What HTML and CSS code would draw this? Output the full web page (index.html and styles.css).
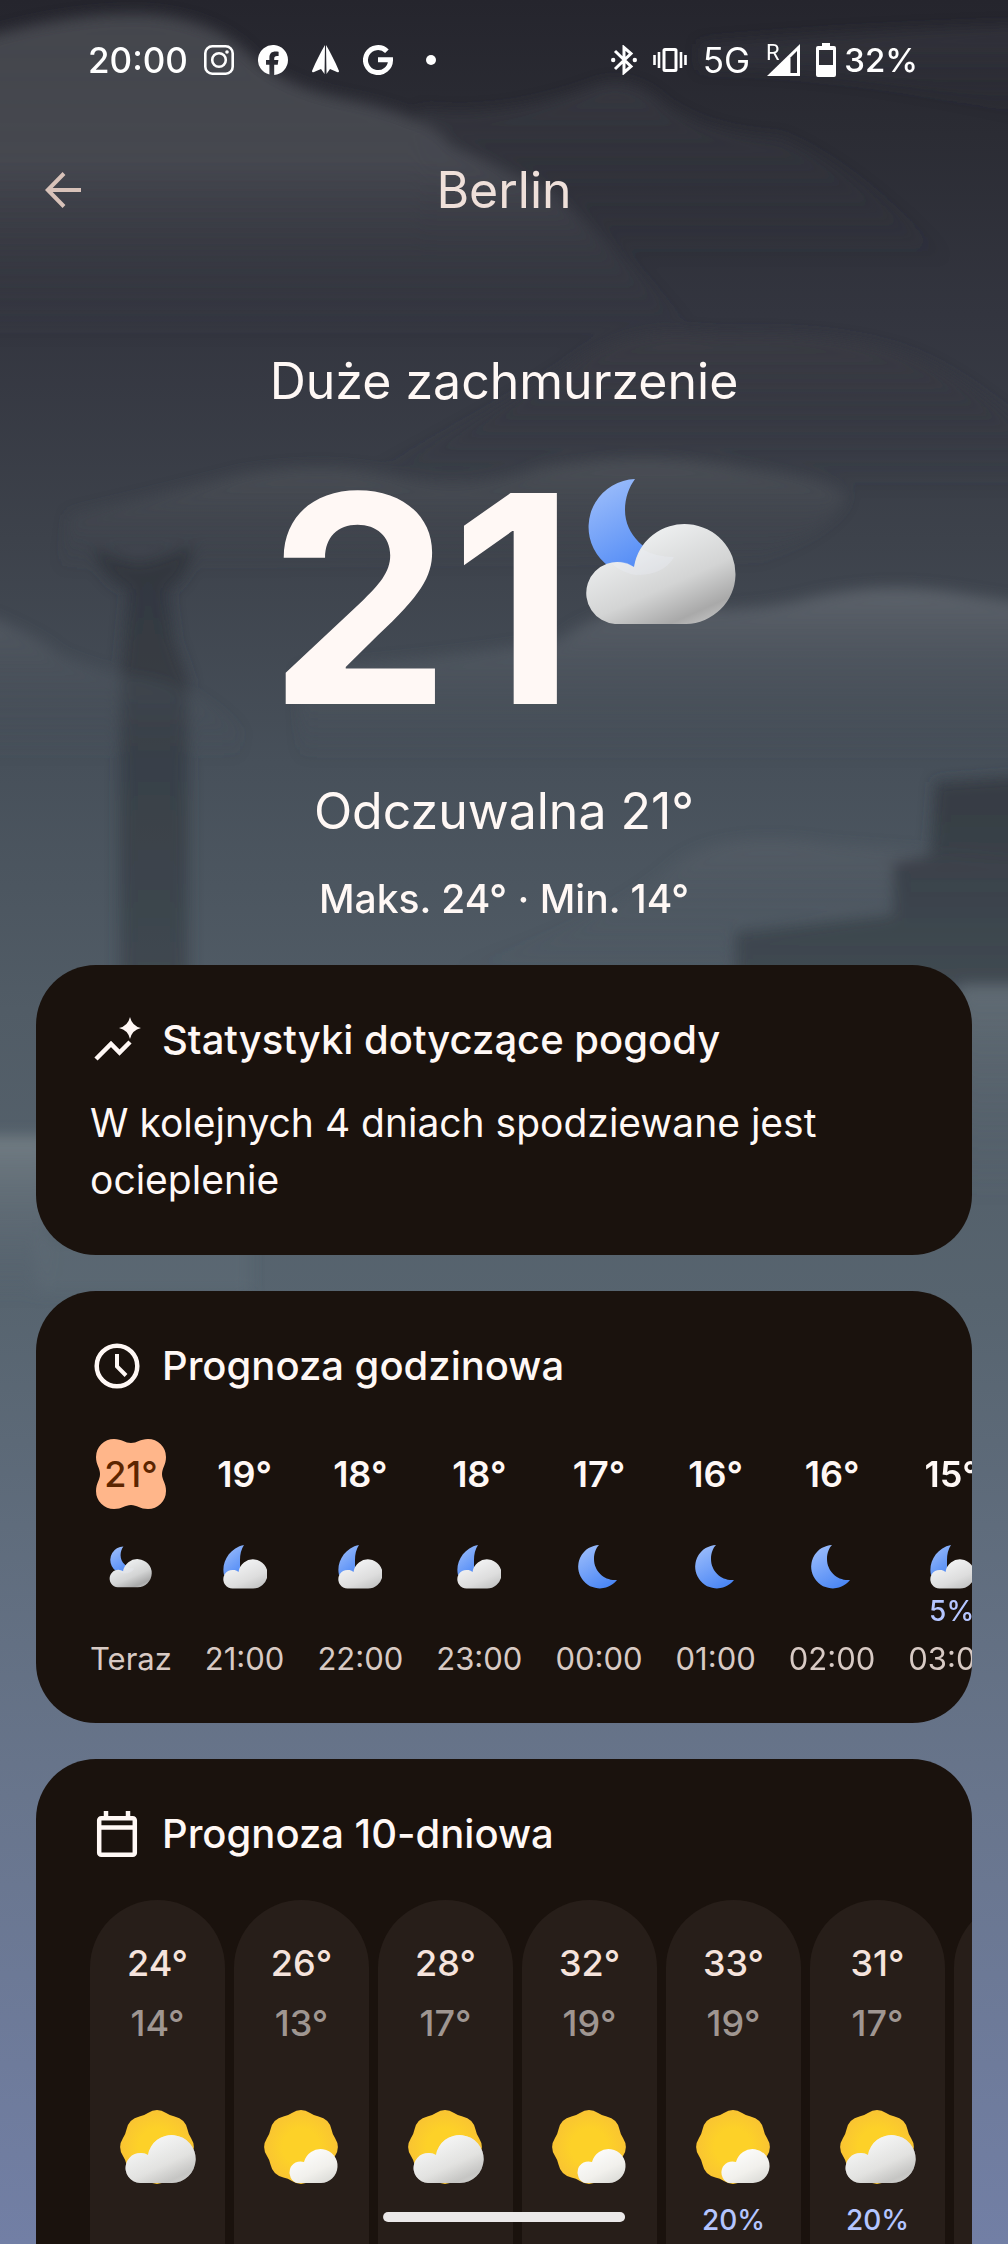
FILE: index.html
```html
<!DOCTYPE html>
<html lang="pl">
<head>
    <meta charset="UTF-8">
    <meta name="viewport" content="width=device-width, initial-scale=1.0">
    <title>Pogoda - Berlin</title>

    <link rel="stylesheet" href="styles.css">
</head>
<body>
    <!-- Shared icons -->
    <svg class="sprite" width="0" height="0" aria-hidden="true">
        <defs>
            <linearGradient id="moonFill" x1="0.2" y1="0" x2="0.7" y2="1">
                <stop offset="0" stop-color="#9cbdfb"/>
                <stop offset="1" stop-color="#4a86f5"/>
            </linearGradient>
            <linearGradient id="cloudFill" x1="0.25" y1="0.1" x2="0.85" y2="1">
                <stop offset="0" stop-color="#f1f3f4"/>
                <stop offset="0.55" stop-color="#d3d4d4"/>
                <stop offset="0.85" stop-color="#a9a9a9"/>
                <stop offset="1" stop-color="#c4c4c4"/>
            </linearGradient>
            <linearGradient id="softCloudFill" x1="0.3" y1="0.1" x2="0.9" y2="1">
                <stop offset="0" stop-color="#f3f4f5"/>
                <stop offset="0.6" stop-color="#dddddd"/>
                <stop offset="1" stop-color="#bdbebe"/>
            </linearGradient>
            <linearGradient id="whiteCloudFill" x1="0.2" y1="0" x2="0.9" y2="1">
                <stop offset="0" stop-color="#ffffff"/>
                <stop offset="0.6" stop-color="#f1f0ec"/>
                <stop offset="1" stop-color="#d8d8d4"/>
            </linearGradient>
            <radialGradient id="sunFill">
                <stop offset="0.5" stop-color="#fdd128"/>
                <stop offset="1" stop-color="#f9c432"/>
            </radialGradient>
        </defs>

        <symbol id="cloudy-night" viewBox="0 0 156 146">
            <path fill="url(#moonFill)" d="M51 0A48 48 0 1 0 90 78C62 76 41 56 41 31 41 19 45 8 51 0z"/>
            <path fill="url(#cloudFill)" d="M31 145A31 31 0 1 1 50 88 51 50 0 1 1 102 145z"/>
            <path fill="#eef4ff" opacity="0.25" d="M50 88Q52 78 58 70 72 78 90 78 80 96 52 96 38 94 27 84 40 80 50 88z"/>
        </symbol>

        <symbol id="mostly-cloudy-night" viewBox="0 0 44 44">
            <path fill="url(#moonFill)" d="M21 0C6 3-2 18 1 30L17 34V15Q17 6 21 0z"/>
            <path fill="url(#softCloudFill)" d="M9.500 43.500A9.300 9.300 0 1 1 15.500 27A14.600 14.600 0 1 1 29 43.500z"/>
        </symbol>

        <symbol id="clear-night" viewBox="0 0 44 44">
            <path fill="url(#moonFill)" d="M22 0A21.700 21.700 0 1 0 40 35C27 36 17 26 17 14 17 8 19 3 22 0z"/>
        </symbol>

        <symbol id="sun" viewBox="0 0 76 76">
            <path fill="url(#sunFill)" d="M27.900 3A17 17 0 0 1 46.100 3Q50 5.600 54.600 6.500A17 17 0 0 1 67.500 19.400Q68.400 24 71 27.900A17 17 0 0 1 71 46.100Q68.400 50 67.500 54.600A17 17 0 0 1 54.600 67.500Q50 68.400 46.100 71A17 17 0 0 1 27.900 71Q24 68.400 19.400 67.500A17 17 0 0 1 6.500 54.600Q5.600 50 3 46.100A17 17 0 0 1 3 27.900Q5.600 24 6.500 19.400A17 17 0 0 1 19.400 6.500Q24 5.600 27.900 3z"/>
        </symbol>

        <symbol id="cloudy-day" viewBox="0 0 76 76">
            <use href="#sun" width="76" height="76"/>
            <path fill="url(#cloudFill)" d="M20 73A15 15 0 1 1 28 45 24 24 0 1 1 52 73z"/>
            <path fill="url(#whiteCloudFill)" opacity="0.5" d="M20 73A15 15 0 1 1 28 45 24 24 0 1 1 52 73z"/>
        </symbol>

        <symbol id="sunny-day" viewBox="0 0 76 76">
            <use href="#sun" width="76" height="76"/>
            <path fill="url(#whiteCloudFill)" d="M33 73A11 11 0 1 1 40 52 17 17 0 1 1 57 73z"/>
        </symbol>
    </svg>

    <div class="screen">
        <!-- Night sky over the city -->
        <svg class="scenery" viewBox="0 0 1008 2244" preserveAspectRatio="none" aria-hidden="true">
            <defs>
                <linearGradient id="mist1" x1="0" y1="0" x2="0" y2="1">
                    <stop offset="0" stop-color="#45464d"/>
                    <stop offset="0.45" stop-color="#4a4c54" stop-opacity="0.85"/>
                    <stop offset="1" stop-color="#3a3d46" stop-opacity="0"/>
                </linearGradient>
                <linearGradient id="mist2" x1="0" y1="0" x2="0" y2="1">
                    <stop offset="0" stop-color="#3a3b43"/>
                    <stop offset="1" stop-color="#33353f" stop-opacity="0"/>
                </linearGradient>
                <linearGradient id="mist3" x1="0" y1="0" x2="0" y2="1">
                    <stop offset="0" stop-color="#50545a"/>
                    <stop offset="1" stop-color="#444851" stop-opacity="0"/>
                </linearGradient>
                <linearGradient id="mist4" x1="0" y1="0" x2="0" y2="1">
                    <stop offset="0" stop-color="#60666e"/>
                    <stop offset="1" stop-color="#4c555f" stop-opacity="0"/>
                </linearGradient>
                <linearGradient id="mist5" x1="0" y1="0" x2="0" y2="1">
                    <stop offset="0" stop-color="#717c83"/>
                    <stop offset="1" stop-color="#5a6672" stop-opacity="0"/>
                </linearGradient>
                <linearGradient id="stone" x1="0" y1="0" x2="0" y2="1">
                    <stop offset="0" stop-color="#2f343b"/>
                    <stop offset="1" stop-color="#3c444c"/>
                </linearGradient>
                <filter id="soft" x="-10%" y="-10%" width="120%" height="120%">
                    <feGaussianBlur stdDeviation="7"/>
                </filter>
            </defs>
            <g filter="url(#soft)">
                <path fill="url(#mist2)" opacity="0.8" d="M420 110Q500 120 590 88 630 72 665 105 710 135 780 138 850 165 950 260H420z"/>
                <path fill="url(#mist2)" opacity="0.6" d="M700 44Q860 30 1040 26V120Q860 70 700 70z"/>
                <path fill="url(#mist1)" d="M-40 45Q60 12 140 14 210 16 250 55 280 85 340 98 430 115 450 145 500 168 545 188 590 220 700 340H-40z"/>
                <path fill="url(#mist2)" d="M340 490Q520 400 570 365 620 325 720 335 860 330 930 365 980 390 1040 440V490z"/>
                <path fill="url(#mist3)" opacity="0.8" d="M70 515Q180 490 240 475 330 460 400 478 470 492 540 468 650 450 740 468 850 480 845 500 830 530 760 560L60 570z"/>
                <path fill="url(#stone)" opacity="0.8" d="M92 546Q120 562 142 562 165 558 194 544 188 580 168 590L174 640 188 680V1000H120V680L128 590Q102 580 92 546z"/>
                <path fill="url(#mist4)" opacity="0.9" d="M300 670Q480 655 560 640 600 605 680 610 760 612 810 598 880 582 950 592L1040 606V760H300z"/>
                <path fill="url(#mist4)" opacity="0.6" d="M-40 605Q40 635 60 655 110 675 150 680 200 690 240 730V760H-40z"/>
                <path fill="url(#mist4)" opacity="0.4" d="M440 970Q600 930 680 860 730 830 830 845L1040 860V970z"/>
                <path fill="url(#stone)" opacity="0.75" d="M935 782L1040 775V988H735V932L893 915V862L930 855z"/>
                <path fill="url(#mist5)" opacity="0.5" d="M960 985H1040V1200H960z"/>
                <path fill="url(#mist5)" d="M-40 1136H50V1300H-40z"/>
                <path fill="#616e79" opacity="0.4" d="M36 1240H250V1292H36z"/>
            </g>
        </svg>

        <header class="status-bar">
            <div class="status-group">
                <span class="status-text">20:00</span>
                <div class="status-apps">
                    <svg width="30" height="30" viewBox="0 0 30 30" fill="none" stroke="#fff" aria-label="Instagram">
                        <rect x="1.300" y="1.300" width="27.400" height="27.400" rx="7" stroke-width="2.600"/>
                        <circle cx="15" cy="15" r="6.800" stroke-width="2.600"/>
                        <circle cx="23" cy="7" r="1.800" fill="#fff" stroke="none"/>
                    </svg>
                    <svg width="30" height="30" viewBox="0 0 30 30" aria-label="Facebook">
                        <path fill="#fff" d="M30 15A15 15 0 1 0 11.400 29.600V19.700H8V15h3.400v-2.200C11.400 8.500 13.500 6.500 17.800 6.500c.8 0 2.200.2 2.800.3v4.300c-.3 0-.8-.1-1.500-.1-2.100 0-2.900.8-2.900 2.900V15h4.200l-.7 4.700h-3.500v10.200A15 15 0 0 0 30 15z"/>
                    </svg>
                    <svg width="27" height="30" viewBox="0 0 27 30" aria-label="Nawigacja">
                        <path fill="#fff" d="M13 0C9 7 4 16 0 26q0 2 2 1l7-3 3.500 5zM14 0c4 7 9 16 13 26q0 2-2 1l-7-3-3.500 5z"/>
                    </svg>
                    <svg width="30" height="30" viewBox="0 0 30 30" fill="none" stroke="#fff" stroke-width="5" aria-label="Google">
                        <path d="M23.900 6.300A12.500 12.500 0 1 0 27.500 14.800H15"/>
                    </svg>
                    <svg width="28" height="30" viewBox="0 0 28 30" aria-label="Więcej">
                        <circle cx="14" cy="15" r="5" fill="#fff"/>
                    </svg>
                </div>
            </div>

            <div class="status-group">
                <svg width="26" height="30" viewBox="0 0 26 30" fill="none" stroke="#fff" stroke-width="3" aria-label="Bluetooth">
                    <path d="M4 6l16 15.500-7 6V2.500l7 6L4 24"/>
                    <circle cx="2.200" cy="15" r="2.200" fill="#fff" stroke="none"/>
                    <circle cx="23.800" cy="15" r="2.200" fill="#fff" stroke="none"/>
                </svg>
                <svg width="34" height="26" viewBox="0 0 34 26" fill="none" stroke="#fff" stroke-width="3" aria-label="Wibracje">
                    <rect x="11" y="2.500" width="12" height="21" rx="1"/>
                    <path d="M1.500 8v10M6 5v16M28 5v16M32.500 8v10" stroke-width="2.600"/>
                </svg>
                <span class="status-text status-network">5G</span>
                <svg class="signal" width="34" height="34" viewBox="0 0 34 34" aria-label="Zasięg">
                    <path fill="#fff" d="M1 33L34 1v32z"/>
                    <path fill="#2b2b33" d="M24.500 14.500L31 8v22h-6.500z"/>
                    <text class="signal-roaming" x="0" y="17">R</text>
                </svg>
                <div class="battery">
                    <svg width="20" height="34" viewBox="0 0 20 34" aria-label="Bateria">
                        <path fill="#fff" fill-rule="evenodd" d="M6 0h8v3h4a2 2 0 0 1 2 2v27a2 2 0 0 1-2 2H2a2 2 0 0 1-2-2V5a2 2 0 0 1 2-2h4zM3 7v15h14V7z"/>
                    </svg>
                    <span class="status-text">32%</span>
                </div>
            </div>
        </header>

        <nav class="app-bar">
            <button type="button" class="back-button" aria-label="Wstecz">
                <svg width="36" height="36" viewBox="0 0 36 36" fill="none" stroke="currentColor" stroke-width="4">
                    <path d="M19 1.500L2.800 18 19 34.500M2.800 18H36"/>
                </svg>
            </button>
            <h1 class="city">Berlin</h1>
        </nav>

        <main>
            <section class="current">
                <p class="condition">Duże zachmurzenie</p>
                <div class="current-temp">
                    <span class="temp-value">21</span>
                    <svg class="current-icon"><use href="#cloudy-night"/></svg>
                </div>
                <p class="feels-like">Odczuwalna 21°</p>
                <p class="range">Maks. 24° · Min. 14°</p>
            </section>

            <section class="card">
                <h2 class="card-title">
                    <svg width="54" height="54" viewBox="0 0 54 54" fill="currentColor" aria-hidden="true">
                        <path d="M40 4q2 9 11 11-9 2-11 11-2-9-11-11 9-2 11-11z"/>
                        <path fill="none" stroke="currentColor" stroke-width="4.500" d="M6 46l15-15 8.500 8.500L40 29"/>
                    </svg>
                    Statystyki dotyczące pogody
                </h2>
                <p class="insight">W kolejnych 4 dniach spodziewane jest ocieplenie</p>
            </section>

            <section class="card">
                <h2 class="card-title">
                    <svg width="54" height="54" viewBox="0 0 54 54" fill="none" stroke="currentColor" aria-hidden="true">
                        <circle cx="27" cy="27" r="20.300" stroke-width="4.500"/>
                        <path stroke-width="4" d="M27 15v12.500l9 9"/>
                    </svg>
                    Prognoza godzinowa
                </h2>
                <ul class="hours">
                    <li class="hour">
                        <span class="hour-temp now">
                            <svg class="now-shape" viewBox="0 0 70 70" aria-hidden="true"><path fill="#ffb68a" d="M18 0C26 0 29 4 35 4S44 0 52 0A18 18 0 0 1 70 18C70 26 66 29 66 35S70 44 70 52A18 18 0 0 1 52 70C44 70 41 66 35 66S26 70 18 70A18 18 0 0 1 0 52C0 44 4 41 4 35S0 26 0 18A18 18 0 0 1 18 0z"/></svg>
                            <span>21°</span>
                        </span>
                        <svg class="hour-icon"><use href="#cloudy-night"/></svg>
                        <span class="rain"></span>
                        <span class="hour-label">Teraz</span>
                    </li>
                    <li class="hour">
                        <span class="hour-temp">19°</span>
                        <svg class="hour-icon"><use href="#mostly-cloudy-night"/></svg>
                        <span class="rain"></span>
                        <span class="hour-label">21:00</span>
                    </li>
                    <li class="hour">
                        <span class="hour-temp">18°</span>
                        <svg class="hour-icon"><use href="#mostly-cloudy-night"/></svg>
                        <span class="rain"></span>
                        <span class="hour-label">22:00</span>
                    </li>
                    <li class="hour">
                        <span class="hour-temp">18°</span>
                        <svg class="hour-icon"><use href="#mostly-cloudy-night"/></svg>
                        <span class="rain"></span>
                        <span class="hour-label">23:00</span>
                    </li>
                    <li class="hour">
                        <span class="hour-temp">17°</span>
                        <svg class="hour-icon"><use href="#clear-night"/></svg>
                        <span class="rain"></span>
                        <span class="hour-label">00:00</span>
                    </li>
                    <li class="hour">
                        <span class="hour-temp">16°</span>
                        <svg class="hour-icon"><use href="#clear-night"/></svg>
                        <span class="rain"></span>
                        <span class="hour-label">01:00</span>
                    </li>
                    <li class="hour">
                        <span class="hour-temp">16°</span>
                        <svg class="hour-icon"><use href="#clear-night"/></svg>
                        <span class="rain"></span>
                        <span class="hour-label">02:00</span>
                    </li>
                    <li class="hour">
                        <span class="hour-temp">15°</span>
                        <svg class="hour-icon"><use href="#mostly-cloudy-night"/></svg>
                        <span class="rain">5%</span>
                        <span class="hour-label">03:00</span>
                    </li>
                </ul>
            </section>

            <section class="card">
                <h2 class="card-title">
                    <svg width="54" height="54" viewBox="0 0 54 54" fill="none" stroke="currentColor" aria-hidden="true">
                        <rect x="9.200" y="11.200" width="35.600" height="36.600" rx="2" stroke-width="4.500"/>
                        <path stroke-width="4.500" d="M9 20.500h36M16 4v7M38 4v7"/>
                    </svg>
                    Prognoza 10-dniowa
                </h2>
                <ul class="days">
                    <li class="day">
                        <span class="high">24°</span>
                        <span class="low">14°</span>
                        <svg class="day-icon"><use href="#cloudy-day"/></svg>
                        <span class="rain"></span>
                    </li>
                    <li class="day">
                        <span class="high">26°</span>
                        <span class="low">13°</span>
                        <svg class="day-icon"><use href="#sunny-day"/></svg>
                        <span class="rain"></span>
                    </li>
                    <li class="day">
                        <span class="high">28°</span>
                        <span class="low">17°</span>
                        <svg class="day-icon"><use href="#cloudy-day"/></svg>
                        <span class="rain"></span>
                    </li>
                    <li class="day">
                        <span class="high">32°</span>
                        <span class="low">19°</span>
                        <svg class="day-icon"><use href="#sunny-day"/></svg>
                        <span class="rain"></span>
                    </li>
                    <li class="day">
                        <span class="high">33°</span>
                        <span class="low">19°</span>
                        <svg class="day-icon"><use href="#sunny-day"/></svg>
                        <span class="rain">20%</span>
                    </li>
                    <li class="day">
                        <span class="high">31°</span>
                        <span class="low">17°</span>
                        <svg class="day-icon"><use href="#cloudy-day"/></svg>
                        <span class="rain">20%</span>
                    </li>
                    <li class="day"></li>
                </ul>
            </section>
        </main>

        <div class="home-indicator"></div>
    </div>
</body>
</html>
```

FILE: styles.css
```css
* {
    box-sizing: border-box;
}

body {
    margin: 0;
    font-family: Inter, Roboto, sans-serif;
    color: #fff8f5;
    background: #25252d;
}

h1, h2, p, ul {
    margin: 0;
    padding: 0;
    font-weight: 400;
}

ul {
    list-style: none;
}

svg {
    display: block;
    flex: none;
}

.sprite {
    position: absolute;
}

/* The app screen always fills the window, the forecast runs under its bottom edge */
.screen {
    position: relative;
    height: 100vh;
    overflow: hidden;
    background: linear-gradient(#25252d 0%, #2b2c34 6%, #33353f 14%, #3d424b 24%, #47505a 34%, #515c66 45%, #57646f 58%, #5f6c7c 68%, #68758c 80%, #727fa5 100%);
}

.scenery {
    position: absolute;
    inset: 0;
    width: 100%;
    height: 100%;
}

/* Status bar */
.status-bar {
    position: relative;
    display: flex;
    justify-content: space-between;
    align-items: center;
    height: 120px;
    padding: 0 90px 0 88px;
    color: #fff;
}

.status-group {
    display: flex;
    align-items: center;
    gap: 16px;
}

.status-apps {
    display: flex;
    align-items: center;
    gap: 24px;
}

.status-text {
    font-size: 35px;
    font-weight: 500;
    line-height: 40px;
}

.status-network {
    font-weight: 400;
}

.signal {
    overflow: visible;
}

.signal-roaming {
    font-family: Roboto, sans-serif;
    font-size: 22px;
    fill: #fff;
}

.battery {
    display: flex;
    align-items: center;
    gap: 8px;
}

.battery .status-text {
    font-size: 33px;
}

/* Title bar */
.app-bar {
    position: relative;
    display: grid;
    grid-template-columns: 1fr auto 1fr;
    align-items: center;
    height: 140px;
    padding: 0 45px;
    color: #efe0da;
}

.back-button {
    justify-self: start;
    padding: 0;
    border: none;
    background: none;
    color: #d8c2b9;
    cursor: pointer;
}

.city {
    font-size: 50px;
    line-height: 64px;
}

/* Current weather */
.current {
    position: relative;
    padding: 89px 36px 42px;
    text-align: center;
}

.condition, .feels-like {
    font-size: 50px;
    line-height: 64px;
}

.current-temp {
    display: flex;
    justify-content: center;
    gap: 8px;
    margin: 66px 0 60px;
}

.temp-value {
    font-size: 290px;
    font-weight: 700;
    line-height: 240px;
}

.current-icon {
    width: 156px;
    height: 146px;
}

.range {
    margin-top: 32px;
    font-size: 39px;
    font-weight: 500;
    line-height: 48px;
}

/* Cards */
.card {
    position: relative;
    margin: 0 36px 36px;
    padding: 48px 0 44px 54px;
    border-radius: 60px;
    background: #1a120d;
    overflow: hidden;
}

.card-title {
    display: flex;
    align-items: center;
    gap: 18px;
    font-size: 40px;
    font-weight: 500;
    line-height: 54px;
}

.insight {
    padding: 27px 54px 3px 0;
    font-size: 39px;
    line-height: 57px;
}

.rain {
    height: 32px;
    font-size: 28px;
    font-weight: 500;
    line-height: 32px;
    color: #b4c5ff;
}

/* Hourly forecast */
.hours {
    display: flex;
    gap: 33px;
    margin-top: 46px;
    overflow-x: auto;
    scrollbar-width: none;
}

.hour {
    display: flex;
    flex: none;
    flex-direction: column;
    align-items: center;
}

.hour-temp {
    display: grid;
    place-items: center;
    height: 70px;
    font-size: 36px;
    font-weight: 600;
}

.now {
    font-weight: 500;
    color: #5c2500;
}

.now > * {
    grid-area: 1 / 1;
}

.now-shape {
    width: 70px;
    height: 70px;
}

.hour-icon {
    width: 44px;
    height: 44px;
    margin: 36px 0 6px;
}

.hour-label {
    margin-top: 12px;
    font-size: 31px;
    line-height: 40px;
    color: #d8cac4;
}

/* 10 day forecast */
.days {
    display: flex;
    gap: 9px;
    margin-top: 39px;
    overflow-x: auto;
    scrollbar-width: none;
}

.day {
    display: flex;
    flex: none;
    flex-direction: column;
    align-items: center;
    width: 135px;
    padding: 39px 0 160px;
    border-radius: 68px;
    background: #271e19;
}

.high, .low {
    font-size: 36px;
    font-weight: 500;
    line-height: 48px;
}

.high {
    color: #f5e3dc;
}

.low {
    margin-top: 12px;
    color: #9f9691;
}

.day-icon {
    width: 76px;
    height: 76px;
    margin: 63px 0 18px;
}

/* Gesture bar */
.home-indicator {
    position: absolute;
    bottom: 22px;
    left: 50%;
    width: 24%;
    height: 10px;
    border-radius: 5px;
    background: #ebe9e9;
    transform: translateX(-50%);
}
```
